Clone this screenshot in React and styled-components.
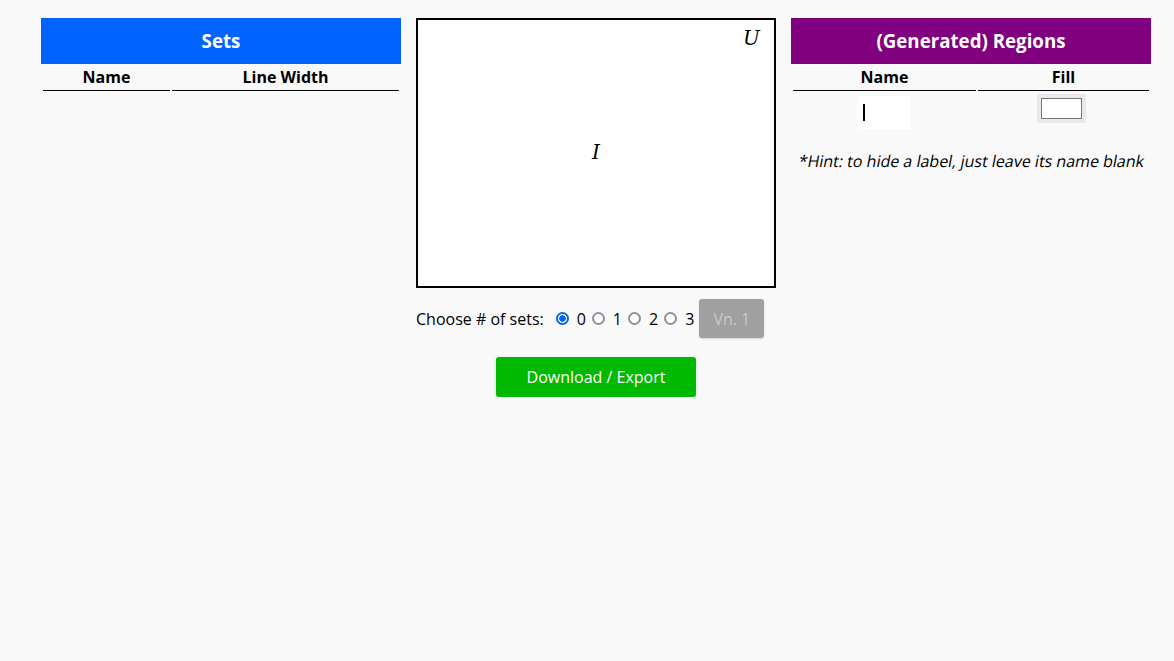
import React from "react";
import styled, { createGlobalStyle } from "styled-components";

const Global = createGlobalStyle`
    body {
        margin: 0;
        background: #f9f9f9;
        font-family: "Open Sans", "Noto Sans", sans-serif;
        color: #000;
    }
`;

const Page = styled.div`
    display: flex;
    align-items: flex-start;
    gap: 15px;
    padding: 18px 0 0 41px;
`;

const Column = styled.div`
    width: 360px;
    display: flex;
    flex-direction: column;
    align-items: ${p => (p.center ? "center" : "stretch")};
`;

const Header = styled.div`
    background: ${p => p.color};
    color: #fff;
    height: 46px;
    display: flex;
    align-items: center;
    justify-content: center;
    font-size: 18.72px;
    font-weight: 700;
    padding-bottom: 2px;
    box-sizing: border-box;
`;

const Table = styled.table`
    width: 100%;
    border-spacing: 2px 0;
    font-size: 16px;
`;

const Th = styled.th`
    font-weight: 700;
    border-bottom: 1px solid #000;
    padding: 1px 0 0;
    line-height: 25px;
    width: ${p => p.width};
`;

const Td = styled.td`
    text-align: center;
    vertical-align: top;
    padding-top: 5px;
`;

const NameInput = styled.div`
    display: inline-block;
    width: 53px;
    height: 33px;
    background: #fff;
    position: relative;
    &:after {
        content: "";
        position: absolute;
        left: 5px;
        top: 8px;
        width: 2px;
        height: 17px;
        background: #000;
    }
`;

const Swatch = styled.div`
    display: inline-block;
    width: 49px;
    height: 29px;
    background: #e9e9ed;
    box-sizing: border-box;
    padding: 4px;
    margin: -2px 0 0 -4px;
    vertical-align: top;
    & > div {
        height: 100%;
        background: #fff;
        border: 1px solid #767676;
        box-sizing: border-box;
    }
`;

const Hint = styled.p`
    font-size: 16px;
    margin: 15px 0 0 8px;
    transform: skewX(-11deg);
    transform-origin: center;
`;

const Canvas = styled.div`
    width: 360px;
    height: 270px;
    box-sizing: border-box;
    border: 2px solid #000;
    background: #fff;
    position: relative;
    font-family: "DejaVu Serif", "Liberation Serif", serif;
    font-style: italic;
    font-size: 20px;
`;

const Label = styled.span`
    position: absolute;
    left: ${p => p.x}px;
    top: ${p => p.y}px;
`;

const Controls = styled.div`
    display: flex;
    align-items: center;
    align-self: stretch;
    margin-top: 11px;
    font-size: 16px;
`;

const Prompt = styled.span`
    margin-right: 12px;
`;

const Radio = styled.span`
    display: inline-flex;
    align-items: center;
    margin-right: 6px;
    &:before {
        content: "";
        flex: none;
        width: 13px;
        height: 13px;
        border-radius: 50%;
        box-sizing: border-box;
        margin-right: 8px;
        border: 2px solid ${p => (p.checked ? "#0b63e5" : "#8f8f9d")};
        background: ${p =>
            p.checked ? "radial-gradient(circle, #0b63e5 0 3px, #fff 3.5px)" : "#fff"};
    }
`;

const VersionButton = styled.button`
    margin-left: -1px;
    width: 65px;
    height: 39px;
    border: none;
    border-radius: 3px;
    background: #a0a0a0;
    color: #c9c9c9;
    font-family: inherit;
    font-size: 16px;
    box-shadow: 0 1px 2px rgba(0, 0, 0, 0.15);
`;

const ExportButton = styled.button`
    margin-top: 19px;
    width: 200px;
    height: 40px;
    border: none;
    border-radius: 3px;
    background: #00b900;
    color: #fff;
    font-family: inherit;
    font-size: 16px;
    box-shadow: 0 1px 3px rgba(0, 0, 0, 0.2);
`;

export default function App() {
    return (
        <>
            <Global />
            <Page>
                <Column>
                    <Header color="#0062ff">Sets</Header>
                    <Table>
                        <thead>
                            <tr>
                                <Th width="127px">Name</Th>
                                <Th>Line Width</Th>
                            </tr>
                        </thead>
                    </Table>
                </Column>

                <Column center>
                    <Canvas>
                        <Label x={325} y={6}>U</Label>
                        <Label x={174} y={120}>I</Label>
                    </Canvas>
                    <Controls>
                        <Prompt>Choose # of sets:</Prompt>
                        <Radio checked>0</Radio>
                        <Radio>1</Radio>
                        <Radio>2</Radio>
                        <Radio>3</Radio>
                        <VersionButton disabled>Vn. 1</VersionButton>
                    </Controls>
                    <ExportButton>Download / Export</ExportButton>
                </Column>

                <Column>
                    <Header color="#800080">(Generated) Regions</Header>
                    <Table>
                        <thead>
                            <tr>
                                <Th width="183px">Name</Th>
                                <Th>Fill</Th>
                            </tr>
                        </thead>
                        <tbody>
                            <tr>
                                <Td><NameInput /></Td>
                                <Td><Swatch><div /></Swatch></Td>
                            </tr>
                        </tbody>
                    </Table>
                    <Hint>*Hint: to hide a label, just leave its name blank</Hint>
                </Column>
            </Page>
        </>
    );
}
